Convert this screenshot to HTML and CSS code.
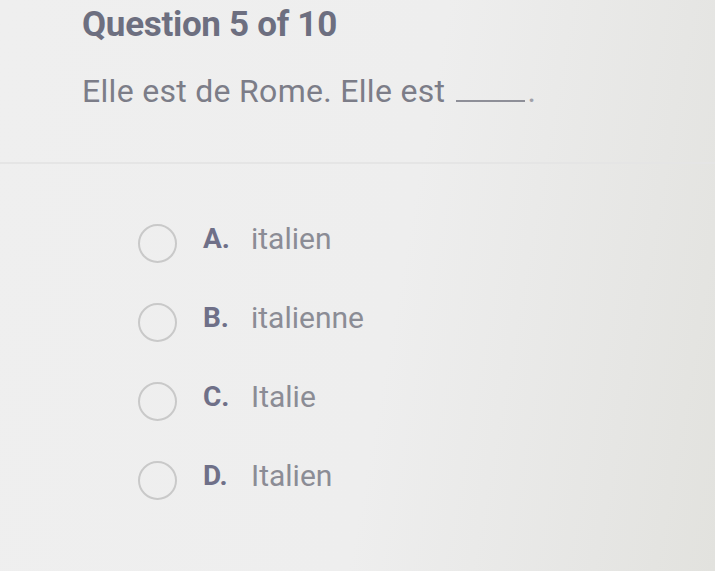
FILE: index.html
```html
<!DOCTYPE html>
<html>
<head>
<meta charset="utf-8">
<link rel="stylesheet" href="styles.css">
</head>
<body>
<div class="page">
  <div class="head">
    <h1 class="title">Question 5 of 10</h1>
    <p class="prompt">Elle est de Rome. Elle est <span class="blank"></span><span class="dot">.</span></p>
  </div>
  <div class="divider"></div>
  <ul class="options">
    <li class="option"><span class="radio"></span><span class="letter">A.</span><span class="answer">italien</span></li>
    <li class="option"><span class="radio"></span><span class="letter">B.</span><span class="answer">italienne</span></li>
    <li class="option"><span class="radio"></span><span class="letter">C.</span><span class="answer">Italie</span></li>
    <li class="option"><span class="radio"></span><span class="letter">D.</span><span class="answer">Italien</span></li>
  </ul>
</div>
</body>
</html>
```
FILE: styles.css
```css
html, body {
  margin: 0;
  padding: 0;
}
body {
  width: 715px;
  height: 571px;
  overflow: hidden;
  background: linear-gradient(100deg, #efefef 0%, #eeeeee 55%, #e6e6e4 85%, #e2e2de 100%);
  font-family: Roboto, "Liberation Sans", sans-serif;
}
.page {
  height: 571px;
  display: flex;
  flex-direction: column;
}
.head {
  padding: 3px 0 0 82px;
}
.title {
  margin: 0;
  font-size: 35px;
  font-weight: 700;
  color: #6d6f80;
  letter-spacing: -0.3px;
  line-height: 44px;
}
.prompt {
  margin: 25px 0 0 0;
  font-size: 32px;
  letter-spacing: 0.3px;
  color: #7c7d88;
  line-height: 38px;
}
.blank {
  display: inline-block;
  width: 69px;
  margin-left: 2px;
  border-bottom: 2px solid #8e8f98;
  vertical-align: baseline;
}
.dot {
  margin-left: 3px;
  color: #a0a1a8;
}
.divider {
  margin-top: 52px;
  height: 2px;
  background: #e5e5e5;
}
.options {
  list-style: none;
  margin: 55px 0 0 0;
  padding: 0 0 0 138px;
  display: flex;
  flex-direction: column;
  gap: 41px;
}
.option {
  display: flex;
  align-items: center;
  height: 38px;
}
.radio {
  width: 35px;
  height: 35px;
  margin-top: 10px;
  border: 2px solid #c9c9c9;
  border-radius: 50%;
  box-sizing: content-box;
  flex: none;
}
.letter {
  margin-left: 26px;
  width: 48px;
  font-size: 28px;
  font-weight: 700;
  color: #6f7088;
}
.answer {
  font-size: 30px;
  color: #8b8c95;
}
```
